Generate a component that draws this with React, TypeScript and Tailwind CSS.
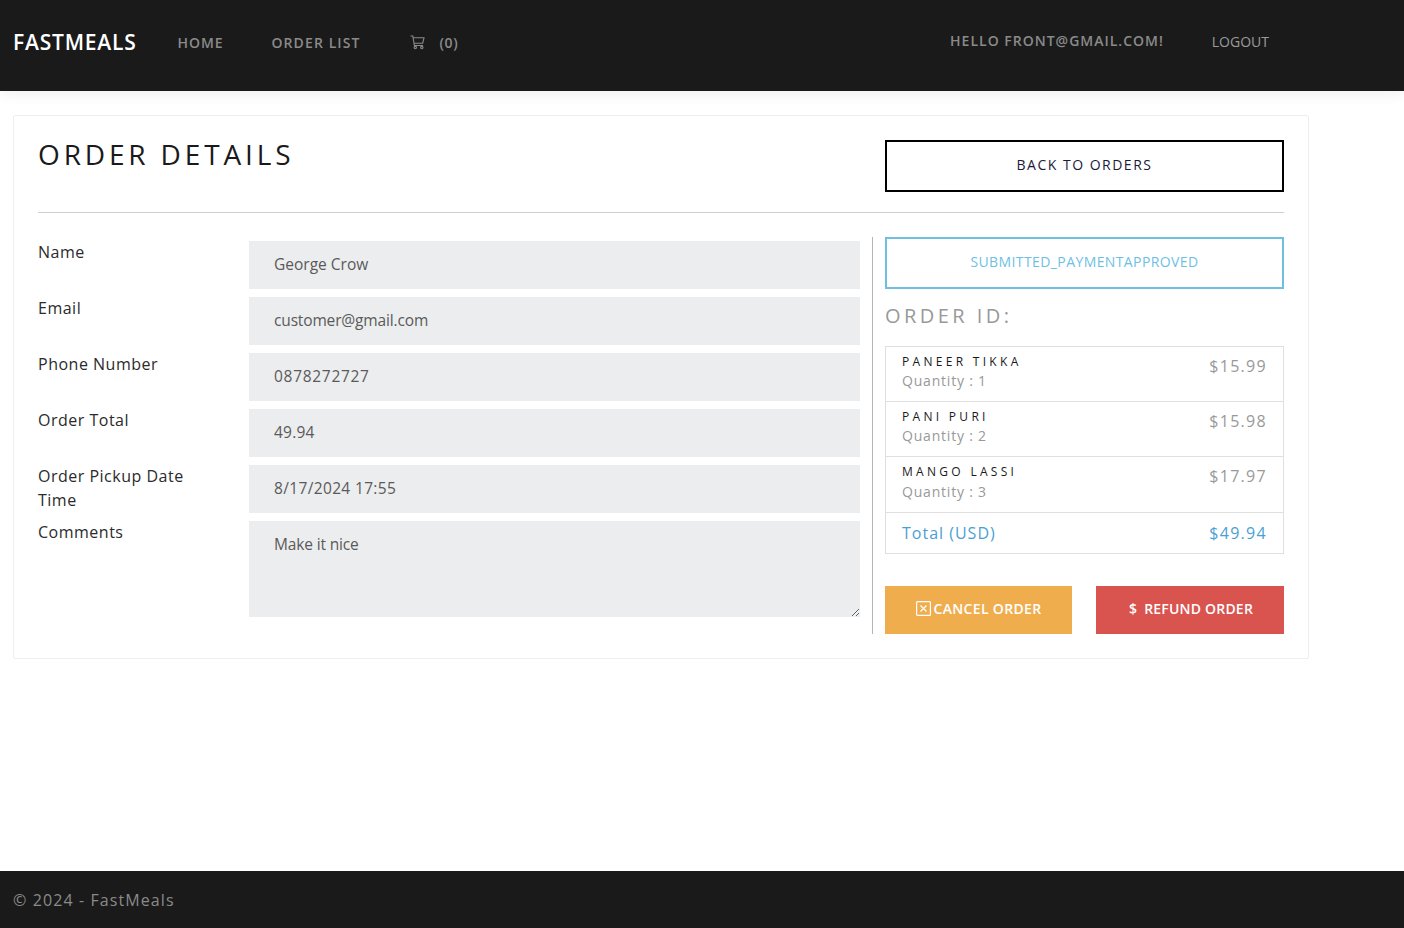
import React from "react";

const F = "font-['Open_Sans','Noto_Sans',sans-serif]";

function Field({ label, value, area, track = "tracking-normal" }: { label: string; value: string; area?: boolean; track?: string }) {
  return (
    <div className="flex">
      <label className="-mt-[1px] w-[211px] shrink-0 pr-[40px] text-[16px] leading-[24px] tracking-[0.5px] text-[#2b2b2b]">{label}</label>
      {area ? (
        <textarea readOnly value={value} className={`h-[96px] w-[611px] bg-[#ecedee] px-[25px] pt-[11px] pb-[13px] text-[15.5px] leading-[24px] text-[#5a5a5a] outline-none ${track}`} />
      ) : (
        <input readOnly value={value} className={`h-[48px] w-[611px] bg-[#ecedee] px-[25px] pb-[2px] text-[15.5px] text-[#5a5a5a] outline-none ${track}`} />
      )}
    </div>
  );
}

function Item({ name, qty, price, h, gap }: { name: string; qty: string; price: string; h: string; gap: string }) {
  return (
    <div className={`flex justify-between border-b border-[#dfdfdf] px-[16px] pt-[6px] ${h}`}>
      <div>
        <div className="text-[12px] leading-[18px] tracking-[3.3px] text-[#1a1a1a]">{name}</div>
        <div className={`${gap} text-[14px] leading-[21px] tracking-[0.8px] text-[#999]`}>{qty}</div>
      </div>
      <div className="pt-[1px] text-[16px] leading-[24px] tracking-[1.3px] text-[#999]">{price}</div>
    </div>
  );
}

export default function App() {
  return (
    <div className={`${F} flex min-h-[928px] flex-col bg-white`}>
      <nav className="flex h-[91px] items-start bg-[#1a1a1a] pl-[13px] shadow-[0_4px_12px_rgba(0,0,0,0.06)]">
        <a className="mt-[29px] text-[21px] leading-[27px] tracking-[0.8px] font-semibold text-white">FASTMEALS</a>
        <a className="ml-[41px] mt-[32px] text-[14px] leading-[21px] tracking-[0.9px] font-semibold text-[#8a8a8a]">HOME</a>
        <a className="ml-[48px] mt-[32px] text-[14px] leading-[21px] tracking-[1.1px] font-semibold text-[#8a8a8a]">ORDER LIST</a>
        <svg className="ml-[49px] mt-[35px]" width="15" height="15" viewBox="0 0 15 15" fill="none" stroke="#8a8a8a" strokeWidth="1.1">
          <path d="M0.5 1H2.8L4.4 10.5H13" />
          <path d="M3.1 2.8H14L12.7 8.2H4" />
          <circle cx="5.3" cy="12.6" r="1.2" />
          <circle cx="11.8" cy="12.6" r="1.2" />
        </svg>
        <span className="ml-[15px] mt-[32px] text-[14px] leading-[21px] tracking-[0.6px] font-semibold text-[#8a8a8a]">(0)</span>
        <span className="ml-auto mt-[30px] text-[14px] leading-[21px] tracking-[1px] font-semibold text-[#8a8a8a]">HELLO FRONT@GMAIL.COM!</span>
        <a className="ml-[48px] mr-[135px] mt-[31px] text-[14px] leading-[21px] text-[#9a9a9a]">LOGOUT</a>
      </nav>

      <main className="flex-1 pl-[13px] pt-[24px]">
        <div className="w-[1296px] rounded-[2px] border border-[#eeeeee] p-[24px]">
          <div className="flex justify-between">
            <h1 className="text-[28px] leading-[28px] tracking-[3.85px] text-[#1a1a1a]">ORDER DETAILS</h1>
            <button className="h-[52px] w-[399px] border-2 border-black pb-[4px] text-[14px] tracking-[1.5px] text-[#1a1a3a]">BACK TO ORDERS</button>
          </div>
          <hr className="mt-[20px] mb-[24px] border-[#cfcfcf]" />
          <div className="flex">
            <div className="flex w-[835px] flex-col gap-[8px] border-r border-[#b5b5b5] pt-[4px] pr-[12px] pb-[17px]">
              <Field label="Name" value="George Crow" />
              <Field label="Email" value="customer@gmail.com" track="tracking-[-0.15px]" />
              <Field label="Phone Number" value="0878272727" track="tracking-[0.7px]" />
              <Field label="Order Total" value="49.94" track="tracking-[0.2px]" />
              <Field label="Order Pickup Date Time" value="8/17/2024 17:55" track="tracking-[0.35px]" />
              <Field label="Comments" value="Make it nice" area track="tracking-[-0.15px]" />
            </div>
            <div className="ml-[12px] w-[399px]">
              <div className="flex h-[52px] items-center justify-center border-2 border-[#6fbfe3] pb-[4px] text-[14px] tracking-[0.4px] text-[#6fbfe3]">SUBMITTED_PAYMENTAPPROVED</div>
              <h2 className="mt-[13px] text-[20px] leading-[28px] tracking-[3.45px] font-medium text-[#999]">ORDER ID:</h2>
              <div className="mt-[16px] border-x border-t border-[#dfdfdf]">
                <Item name="PANEER TIKKA" qty="Quantity : 1" price="$15.99" h="h-[55px]" gap="-mt-[1px]" />
                <Item name="PANI PURI" qty="Quantity : 2" price="$15.98" h="h-[55px]" gap="-mt-[1px]" />
                <Item name="MANGO LASSI" qty="Quantity : 3" price="$17.97" h="h-[56px]" gap="mt-0" />
                <div className="flex h-[41px] items-center justify-between border-b border-[#dfdfdf] px-[16px] text-[16px] tracking-[1px] text-[#4a9fd4]">
                  <span>Total (USD)</span>
                  <span className="tracking-[1.3px]">$49.94</span>
                </div>
              </div>
              <div className="mt-[32px] flex justify-between">
                <button className="flex h-[48px] w-[187px] items-center justify-center gap-[3px] bg-[#f0ad4e] pb-[3px] text-[14px] tracking-[0.33px] font-semibold text-white">
                  <svg width="15" height="15" viewBox="0 0 15 15" fill="none" stroke="white" strokeWidth="1.2">
                    <rect x="0.6" y="0.6" width="13.8" height="13.8" rx="1" />
                    <path d="M4.5 4.5L10.5 10.5M10.5 4.5L4.5 10.5" />
                  </svg>
                  CANCEL ORDER
                </button>
                <button className="flex h-[48px] w-[188px] items-center justify-center gap-[7px] bg-[#d9534f] pb-[3px] pl-[2px] text-[14px] tracking-[0.2px] font-semibold text-white">
                  <span>$</span>
                  REFUND ORDER
                </button>
              </div>
            </div>
          </div>
        </div>
      </main>

      <footer className="flex h-[57px] items-center bg-[#1a1a1a] pl-[13px] text-[16px] tracking-[1.1px] text-[#8a8a8a]">© 2024 - FastMeals</footer>
    </div>
  );
}
